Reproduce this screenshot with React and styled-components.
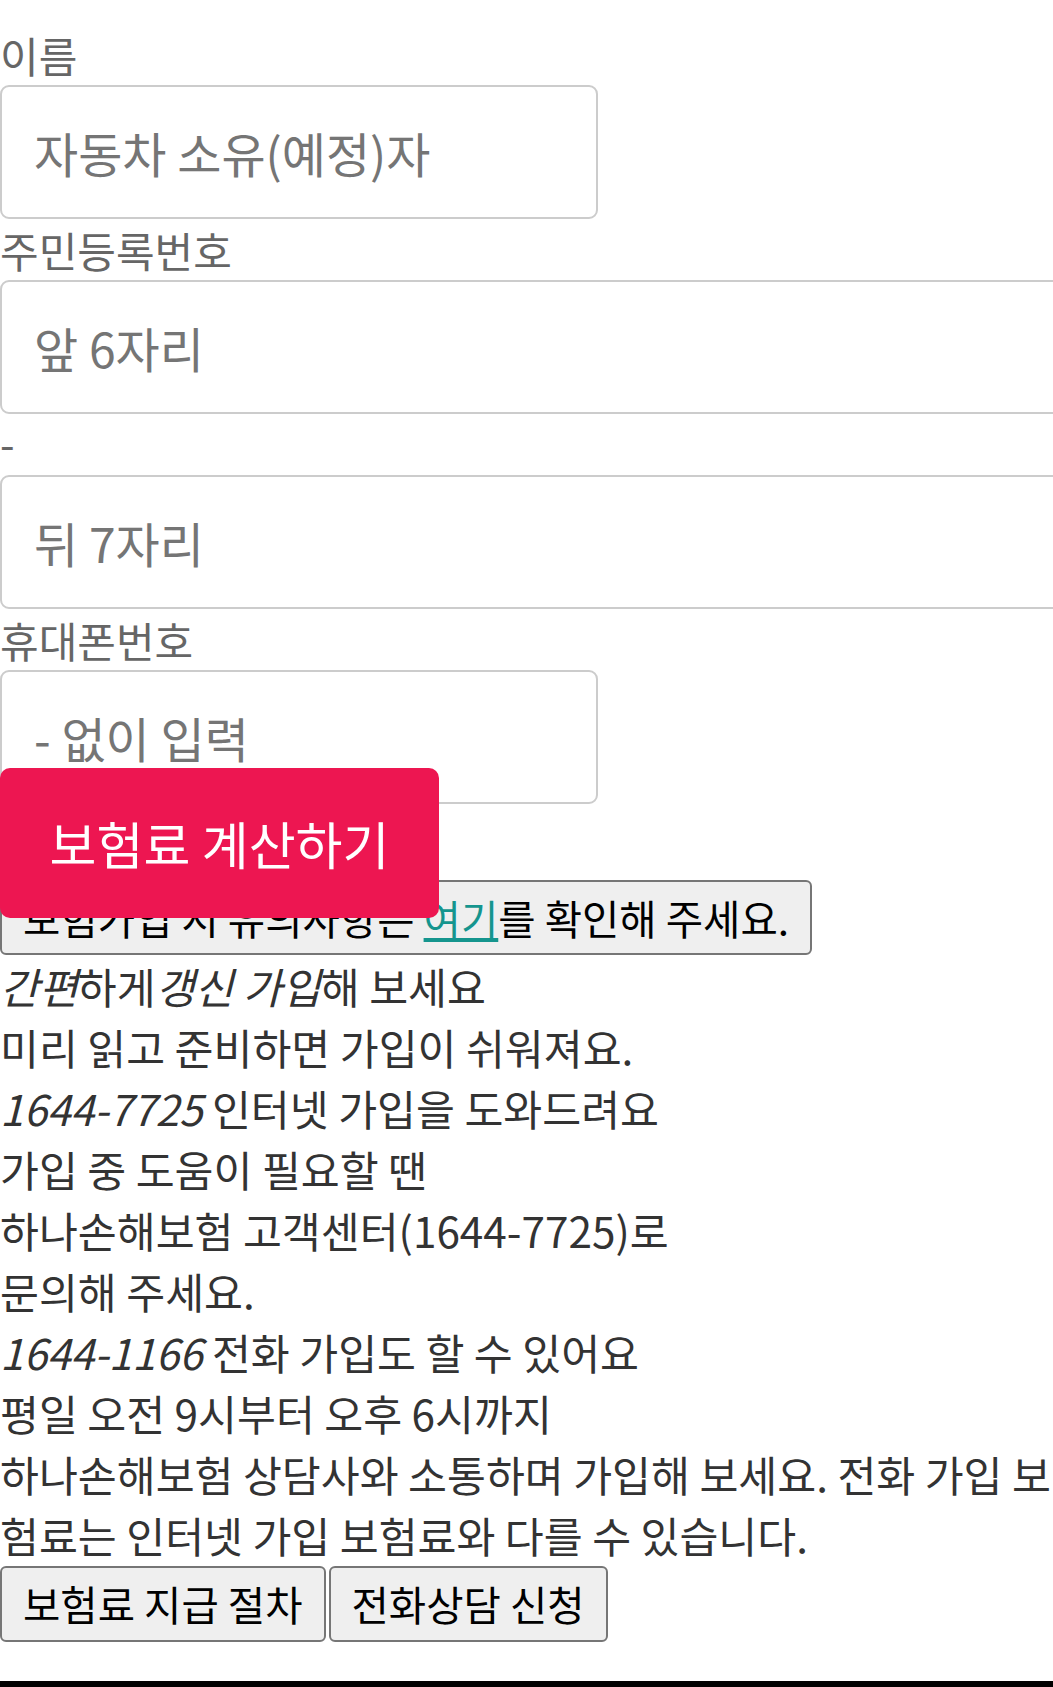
import React from "react";
import styled, { createGlobalStyle } from "styled-components";

const GlobalStyle = createGlobalStyle`
  html, body {
    margin: 0;
    padding: 0;
    background: #ffffff;
  }
  body {
    font-family: "Noto Sans CJK KR", "Noto Sans", sans-serif;
    overflow: hidden;
  }
`;

const Viewport = styled.div`
  width: 100%;
  overflow: hidden;
`;

const Page = styled.div`
  width: 1070px;
  padding-top: 24px;
  font-size: 42px;
  line-height: 61px;
  color: #333333;
`;

const Label = styled.label`
  display: block;
  font-size: 42px;
  line-height: 61px;
  color: #666666;
`;

const Field = styled.input`
  display: block;
  box-sizing: border-box;
  width: ${(p) => p.$width || "100%"};
  height: 134px;
  margin: 0;
  padding: 0 32px;
  border: 2px solid #cccccc;
  border-radius: 9px;
  background: #ffffff;
  font-family: "Noto Sans CJK KR", "Noto Sans", sans-serif;
  font-size: 48px;
  color: #333333;
  outline: none;

  &::placeholder {
    color: #757575;
  }
`;

const Dash = styled.div`
  font-size: 42px;
  line-height: 56px;
  padding-bottom: 5px;
  color: #666666;
`;

const CalcArea = styled.div`
  position: relative;
  height: 76px;
`;

const CalcButton = styled.button`
  position: absolute;
  top: -36px;
  left: 0;
  z-index: 2;
  width: 439px;
  height: 150px;
  border: none;
  border-radius: 10px;
  background: #ed1651;
  color: #ffffff;
  font-family: "Noto Sans CJK KR", "Noto Sans", sans-serif;
  font-size: 51px;
  padding: 0;
`;

const GrayButton = styled.button`
  display: inline-block;
  box-sizing: border-box;
  height: ${(p) => p.$height || "75px"};
  margin: 0;
  padding: 0 21px;
  border: 2px solid #767676;
  border-radius: 6px;
  background: #efefef;
  color: #000000;
  font-family: "Noto Sans CJK KR", "Noto Sans", sans-serif;
  font-size: 40.6px;
  line-height: 56px;
  white-space: nowrap;
`;

const Link = styled.a`
  color: #15958e;
  text-decoration: underline;
`;

const Line = styled.div`
  font-size: 42.3px;
  line-height: 61px;
  color: #333333;
`;

const Em = styled.em`
  font-style: italic;
`;

const ButtonRow = styled.div`
  display: flex;
  gap: 3px;
  padding-top: 1px;
`;

const Footer = styled.div`
  margin-top: 39px;
  height: 40px;
  background: #000000;
`;

export default function App() {
  return (
    <Viewport>
      <GlobalStyle />
      <Page>
        <Label>이름</Label>
        <Field $width="598px" placeholder="자동차 소유(예정)자" />
        <Label>주민등록번호</Label>
        <Field placeholder="앞 6자리" />
        <Dash>-</Dash>
        <Field placeholder="뒤 7자리" />
        <Label>휴대폰번호</Label>
        <Field $width="598px" placeholder="- 없이 입력" />
        <CalcArea>
          <CalcButton>보험료 계산하기</CalcButton>
        </CalcArea>
        <GrayButton>
          보험가입 시 유의사항은 <Link href="#">여기</Link>를 확인해 주세요.
        </GrayButton>
        <Line>
          <Em>간편</Em>하게<Em>갱신 가입</Em>해 보세요
        </Line>
        <Line>미리 읽고 준비하면 가입이 쉬워져요.</Line>
        <Line>
          <Em>1644-7725</Em> 인터넷 가입을 도와드려요
        </Line>
        <Line>가입 중 도움이 필요할 땐</Line>
        <Line>하나손해보험 고객센터(1644-7725)로</Line>
        <Line>문의해 주세요.</Line>
        <Line>
          <Em>1644-1166</Em> 전화 가입도 할 수 있어요
        </Line>
        <Line>평일 오전 9시부터 오후 6시까지</Line>
        <Line>
          하나손해보험 상담사와 소통하며 가입해 보세요. 전화 가입 보험료는 인터넷 가입 보험료와 다를 수 있습니다.
        </Line>
        <ButtonRow>
          <GrayButton $height="76px">보험료 지급 절차</GrayButton>
          <GrayButton $height="76px">전화상담 신청</GrayButton>
        </ButtonRow>
        <Footer />
      </Page>
    </Viewport>
  );
}
